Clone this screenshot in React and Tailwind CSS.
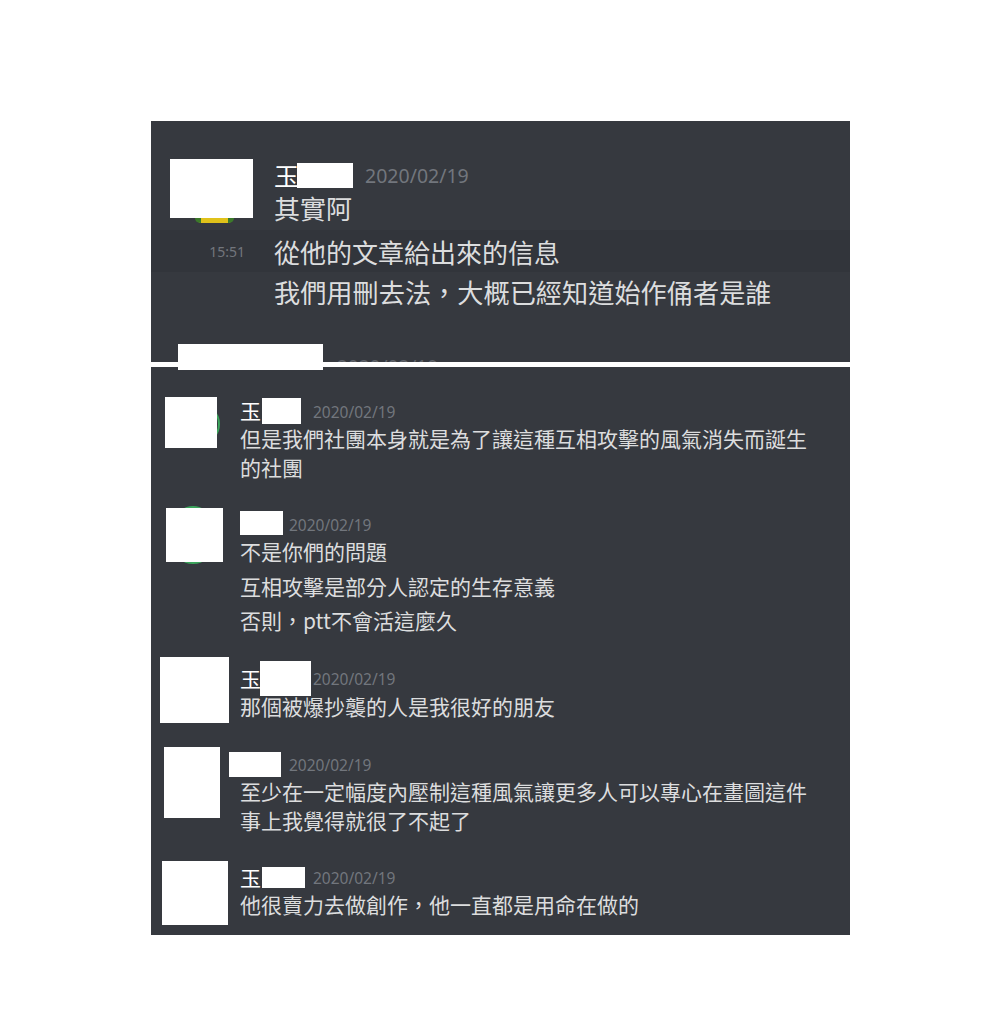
import React from "react";

const cjk = "font-['Noto_Sans_CJK_TC','Noto_Sans',sans-serif]";

const Stamp = ({ className = "" }) => (
  <span className={`font-['Noto_Sans',sans-serif] text-[#72767d] leading-none whitespace-nowrap ${className}`}>
    2020/02/19
  </span>
);

const App = () => {
  return (
    <div className={`min-h-screen bg-white pt-[121px] pl-[151px] ${cjk}`}>
      <div className="relative w-[699px]">
        {/* top crop */}
        <div className="relative h-[241px] overflow-hidden bg-[#36393f] pt-[38px] text-[#dcddde]">
          <div className="flex">
            <div className="w-[123px] shrink-0 pl-[19px]">
              <div className="w-[83px] h-[59px] bg-white" />
              <div className="ml-[25px] w-[39px] h-[5px] rounded-b-full bg-[#e0c21a] border-x-[6px] border-[#3c7a2a]" />
            </div>
            <div className="flex flex-col">
              <div className="flex items-center h-[32px]">
                <span className="text-[25px] text-white leading-none">玉</span>
                <div className="-ml-[2px] w-[56px] h-[25px] bg-white" />
                <Stamp className="ml-[12px] mt-[2px] text-[19.5px]" />
              </div>
              <div className="h-[34px] leading-[34px] text-[26px]">其實阿</div>
            </div>
          </div>
          <div className="mt-[5px] h-[42px] bg-[#32353b] flex items-center">
            <div className="w-[123px] shrink-0 pr-[29px] text-right font-['Noto_Sans',sans-serif] text-[14px] text-[#72767d]">
              15:51
            </div>
            <div className="text-[26px]">從他的文章給出來的信息</div>
          </div>
          <div className="h-[42px] flex items-center pl-[123px] text-[26.2px]">
            我們用刪去法，大概已經知道始作俑者是誰
          </div>
          <Stamp className="absolute left-[186px] top-[237px] text-[19px] opacity-70" />
        </div>

        <div className="h-[5px] bg-white" />

        {/* bottom crop */}
        <div className="h-[568px] bg-[#36393f] pt-[30px] text-[21px] text-[#dcddde]">
          {/* msg 1 */}
          <div className="flex">
            <div className="relative w-[89px] shrink-0">
              <div className="absolute left-[20px] top-[6px] w-[49px] h-[42px] rounded-full border-2 border-[#3ba55c]" />
              <div className="relative ml-[14px] w-[52px] h-[51px] bg-white" />
            </div>
            <div>
              <div className="flex items-center h-[27px]">
                <span className="text-white leading-none">玉</span>
                <div className="ml-[1px] w-[39px] h-[26px] bg-white" />
                <Stamp className="ml-[12px] mt-[4px] text-[15.5px]" />
              </div>
              <div className="w-[580px] leading-[29px]">
                但是我們社團本身就是為了讓這種互相攻擊的風氣消失而誕生的社團
              </div>
            </div>
          </div>

          {/* msg 2 */}
          <div className="flex mt-[26px]">
            <div className="relative w-[89px] shrink-0">
              <div className="absolute left-[22px] top-[-2px] w-[40px] h-[58px] rounded-full border-2 border-[#3ba55c]" />
              <div className="relative ml-[15px] w-[57px] h-[54px] bg-white" />
            </div>
            <div>
              <div className="flex items-center h-[29px]">
                <div className="w-[43px] h-[24px] bg-white" />
                <Stamp className="ml-[6px] mt-[6px] text-[15.5px]" />
              </div>
              <div className="leading-[28px]">不是你們的問題</div>
              <div className="mt-[4px] leading-[34px]">互相攻擊是部分人認定的生存意義</div>
              <div className="leading-[34px]">否則，ptt不會活這麼久</div>
            </div>
          </div>

          {/* msg 3 */}
          <div className="flex mt-[20px]">
            <div className="w-[89px] shrink-0">
              <div className="ml-[9px] w-[69px] h-[66px] bg-white" />
            </div>
            <div className="pt-[7px]">
              <div className="flex items-center h-[28px]">
                <span className="text-white leading-none">玉</span>
                <div className="-ml-[1px] w-[51px] h-[35px] bg-white" />
                <Stamp className="ml-[2px] mt-[4px] text-[15.5px]" />
              </div>
              <div className="leading-[28px]">那個被爆抄襲的人是我很好的朋友</div>
            </div>
          </div>

          {/* msg 4 */}
          <div className="flex mt-[24px]">
            <div className="w-[89px] shrink-0">
              <div className="ml-[13px] w-[56px] h-[71px] bg-white" />
            </div>
            <div className="pt-[4px]">
              <div className="flex items-center h-[26px]">
                <div className="-ml-[11px] w-[52px] h-[25px] bg-white" />
                <Stamp className="ml-[8px] mt-[4px] text-[15.5px]" />
              </div>
              <div className="w-[580px] leading-[29px]">
                至少在一定幅度內壓制這種風氣讓更多人可以專心在畫圖這件事上我覺得就很了不起了
              </div>
            </div>
          </div>

          {/* msg 5 */}
          <div className="flex mt-[26px]">
            <div className="w-[89px] shrink-0">
              <div className="ml-[11px] w-[66px] h-[64px] bg-white" />
            </div>
            <div className="pt-[2px]">
              <div className="flex items-center h-[28px]">
                <span className="text-white leading-none">玉</span>
                <div className="ml-[1px] w-[43px] h-[21px] bg-white" />
                <Stamp className="ml-[8px] mt-[4px] text-[15.5px]" />
              </div>
              <div className="leading-[27px]">他很賣力去做創作，他一直都是用命在做的</div>
            </div>
          </div>
        </div>

        {/* redaction over the seam */}
        <div className="absolute left-[27px] top-[223px] w-[145px] h-[26px] bg-white" />
      </div>
    </div>
  );
};

export default App;
